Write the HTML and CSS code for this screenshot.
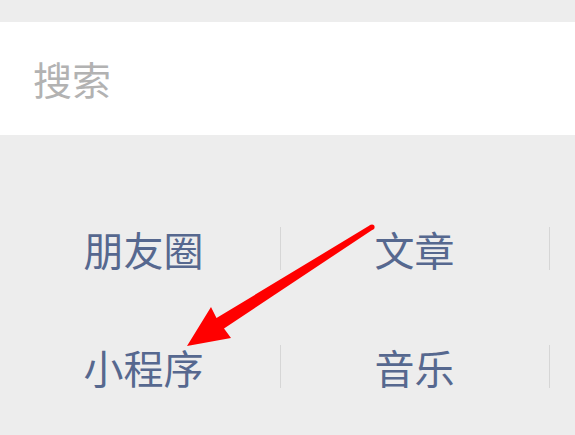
FILE: index.html
```html
<!DOCTYPE html>
<html lang="zh">
<head>
<meta charset="utf-8">
<link rel="stylesheet" href="styles.css">
</head>
<body>
<div class="page">
  <div class="search">搜索</div>
  <div class="grid">
    <div class="cell">朋友圈</div>
    <div class="cell div">文章</div>
    <div class="cell div"></div>
    <div class="cell">小程序</div>
    <div class="cell div">音乐</div>
    <div class="cell div"></div>
  </div>
  <svg class="arrow" width="575" height="435" viewBox="0 0 575 435">
    <circle cx="372" cy="227" r="2.6" fill="#ff0000"/>
    <polygon fill="#ff0000" points="187,346 211,307 216.5,318 370.7,224.8 373.3,229.2 224,328.5 231,338"/>
  </svg>
</div>
</body>
</html>
```
FILE: styles.css
```css
html, body {
  margin: 0;
  padding: 0;
  background: #ededed;
}
.page {
  position: relative;
  width: 575px;
  height: 435px;
  overflow: hidden;
  font-family: "Noto Sans CJK SC", "Noto Sans", sans-serif;
}
.search {
  margin-top: 22px;
  height: 113px;
  background: #ffffff;
  display: flex;
  align-items: center;
  padding-left: 33px;
  font-size: 39px;
  color: #b2b2b2;
  line-height: 1;
}
.grid {
  margin-top: 55px;
  padding-left: 7px;
  display: grid;
  grid-template-columns: 273px 269px 269px;
  grid-auto-rows: 118px;
  width: 820px;
}
.cell {
  position: relative;
  display: flex;
  align-items: center;
  justify-content: center;
  font-size: 40px;
  font-weight: 400;
  line-height: 1;
  color: #56688f;
}
.cell.div::before {
  content: "";
  position: absolute;
  left: 0;
  top: 50%;
  height: 43px;
  margin-top: -22px;
  width: 1px;
  background: #d6d6d6;
}
.arrow {
  position: absolute;
  left: 0;
  top: 0;
}
```
